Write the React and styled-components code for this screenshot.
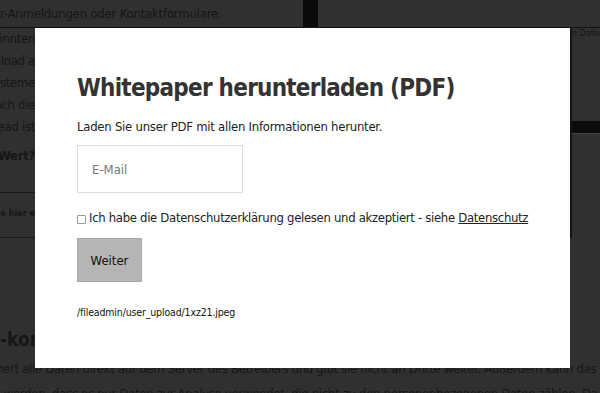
import React from 'react'
import styled, { createGlobalStyle } from 'styled-components'

const Global = createGlobalStyle`
  html, body { margin: 0; padding: 0; }
  body {
    width: 600px;
    height: 393px;
    overflow: hidden;
    background: #303030;
    font-family: "DejaVu Sans Condensed", "Lato", sans-serif;
  }
`

const Page = styled.div`
  position: relative;
  width: 600px;
  height: 393px;
  overflow: hidden;
  background: #303030;
  color: #161616;
`

const TopLine = styled.div`
  height: 27px;
  display: flex;
  font-size: 13px;
  letter-spacing: -0.2px;
  line-height: 27px;
  border-bottom: 1px solid #121212;
`

const TopText = styled.div`
  width: 303px;
  white-space: nowrap;
  overflow: hidden;
`

const TopGap = styled.div`
  width: 15px;
  background: #0b0b0b;
`

const Columns = styled.div`
  display: flex;
  justify-content: space-between;
`

const LeftCol = styled.div`
  width: 35px;
  display: flex;
  flex-direction: column;
  white-space: nowrap;
  overflow: hidden;
`

const Line = styled.div`
  font-size: 13px;
  letter-spacing: -0.3px;
  line-height: 22px;
  font-weight: ${p => (p.$bold ? 700 : 400)};
  margin-top: ${p => p.$top || 0}px;
  display: flex;
  justify-content: flex-end;
`

const LeftBox = styled.div`
  margin-top: 25px;
  height: 44px;
  border-top: 1px solid #1a1a1a;
  border-bottom: 1px solid #1a1a1a;
  font-size: 9px;
  font-weight: 700;
  line-height: 40px;
  display: flex;
  justify-content: flex-end;
`

const RightCol = styled.div`
  width: 28px;
  border-left: 2px solid #141414;
  display: flex;
  flex-direction: column;
  font-size: 9px;
  white-space: nowrap;
  overflow: hidden;
`

const RightBand = styled.div`
  margin-top: 83px;
  height: 12px;
  background: #0b0b0b;
  border-bottom: 1px solid #444;
`

const Bottom = styled.div`
  position: absolute;
  left: 0;
  right: 0;
  top: 322px;
  white-space: nowrap;
  overflow: hidden;
`

const BottomHead = styled.div`
  font-size: 19px;
  font-weight: 700;
  line-height: 34px;
`

const BottomLine = styled.div`
  font-size: 13px;
  letter-spacing: -0.3px;
  line-height: 25px;
  margin-left: -4px;
`

const Modal = styled.div`
  position: absolute;
  left: 35px;
  top: 28px;
  width: 535px;
  height: 340px;
  box-sizing: border-box;
  background: #fff;
  padding: 44px 42px 0;
  display: flex;
  flex-direction: column;
  align-items: flex-start;
  color: #222;
`

const Title = styled.h1`
  margin: 0;
  font-size: 24px;
  letter-spacing: -0.75px;
  line-height: 32px;
  font-weight: 700;
  color: #333;
  white-space: nowrap;
`

const Lead = styled.p`
  margin: 13px 0 0;
  font-size: 13px;
  letter-spacing: -0.25px;
  line-height: 20px;
`

const Input = styled.div`
  margin-top: 8px;
  width: 166px;
  height: 48px;
  box-sizing: border-box;
  border: 1px solid #dcdcdc;
  padding-left: 14px;
  display: flex;
  align-items: center;
  font-size: 13px;
  color: #777;
`

const CheckRow = styled.label`
  margin-top: 15px;
  display: flex;
  align-items: center;
  font-size: 13px;
  letter-spacing: -0.32px;
  line-height: 20px;
  white-space: nowrap;
`

const Box = styled.span`
  width: 7px;
  height: 7px;
  border: 1px solid #999;
  border-radius: 1px;
  margin: 3px 3px 0 0;
  flex: none;
`

const Link = styled.a`
  color: #222;
  text-decoration: underline;
`

const Button = styled.button`
  margin-top: 10px;
  width: 65px;
  height: 44px;
  border: 1px solid #a9a9a9;
  background: #b5b5b5;
  font-family: inherit;
  font-size: 13px;
  color: #111;
  padding: 0;
`

const Path = styled.div`
  margin-top: 22px;
  font-size: 10.5px;
  letter-spacing: -0.15px;
  line-height: 16px;
  color: #111;
`

export default function App() {
  return (
    <Page>
      <Global />
      <TopLine>
        <TopText>r-Anmeldungen oder Kontaktformulare.</TopText>
        <TopGap />
      </TopLine>
      <Columns>
        <LeftCol>
          <Line>n könnten</Line>
          <Line>Download a</Line>
          <Line>Systeme</Line>
          <Line>auch die</Line>
          <Line>der Lead ist</Line>
          <Line $bold $top={7}>Wert?</Line>
          <LeftBox>Sie hier e</LeftBox>
        </LeftCol>
        <RightCol>
          <span>e Datenschutz</span>
          <RightBand />
        </RightCol>
      </Columns>
      <Bottom>
        <BottomHead>-kon</BottomHead>
        <BottomLine>hert alle Daten direkt auf dem Server des Betreibers und gibt sie nicht an Dritte weiter. Außerdem kann das System</BottomLine>
        <BottomLine>t werden, dass es nur Daten zur Analyse verwendet, die nicht zu den personenbezogenen Daten zählen. Da</BottomLine>
      </Bottom>
      <Modal>
        <Title>Whitepaper herunterladen (PDF)</Title>
        <Lead>Laden Sie unser PDF mit allen Informationen herunter.</Lead>
        <Input>E-Mail</Input>
        <CheckRow>
          <Box />
          <span>
            Ich habe die Datenschutzerklärung gelesen und akzeptiert - siehe <Link>Datenschutz</Link>
          </span>
        </CheckRow>
        <Button>Weiter</Button>
        <Path>/fileadmin/user_upload/1xz21.jpeg</Path>
      </Modal>
    </Page>
  )
}
